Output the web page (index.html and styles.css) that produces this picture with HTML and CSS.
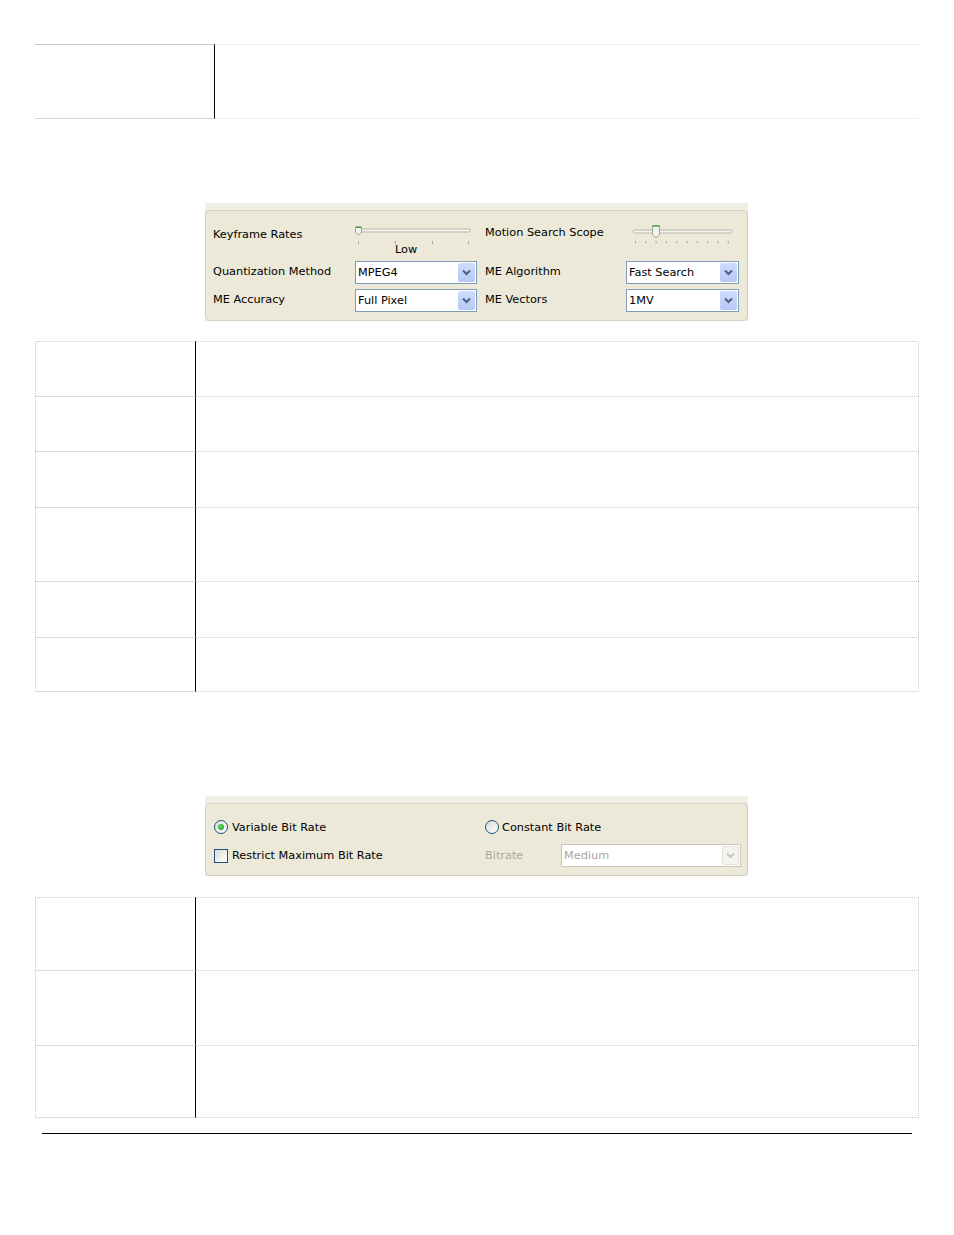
FILE: index.html
```html
<!DOCTYPE html>
<html>
<head>
<meta name="viewport" content="width=device-width, initial-scale=1">
<title>Encoder Settings</title>
<link rel="stylesheet" href="styles.css">
</head>
<body>
<div class="page">

   <!-- Top table -->
   <div class="spec spec-top">
      <div class="spec-row">
         <div class="spec-key"></div>
         <div class="spec-val"></div>
      </div>
   </div>

   <!-- Advanced motion panel -->
   <div class="panel panel-motion">
      <div class="group group-motion">
         <div class="label label-key">Keyframe Rates</div>
         <div class="slider-cell">
            <svg width="122" height="34" viewBox="0 0 122 34" xmlns="http://www.w3.org/2000/svg">
               <rect x="0.5" y="7" width="115" height="3" rx="1.5" fill="#f4f3ee" stroke="#a9a89f" stroke-width="0.8"/>
               <g stroke="#a6a59c" stroke-width="1">
                  <line x1="3.5" y1="19" x2="3.5" y2="22"/>
                  <line x1="40.5" y1="19" x2="40.5" y2="22"/>
                  <line x1="77.5" y1="19" x2="77.5" y2="22"/>
                  <line x1="113.5" y1="19" x2="113.5" y2="22"/>
               </g>
               <polygon points="0.5,5 6.5,5 6.5,10 3.5,13 0.5,10" fill="#f4f4ef" stroke="#86907f" stroke-width="0.8"/>
               <line x1="1" y1="5.3" x2="6" y2="5.3" stroke="#3aa63a" stroke-width="1.4"/>
               <text x="51" y="31" text-anchor="middle" class="slider-text">Low</text>
            </svg>
         </div>
         <div class="label label-motion">Motion Search Scope</div>
         <div class="slider-cell">
            <svg width="113" height="34" viewBox="0 0 113 34" xmlns="http://www.w3.org/2000/svg">
               <rect x="7" y="8" width="99" height="3" rx="1.5" fill="#f4f3ee" stroke="#a9a89f" stroke-width="0.8"/>
               <g id="motionTicks" stroke="#a6a59c" stroke-width="1"></g>
               <polygon points="26.5,3.5 33.5,3.5 33.5,12.5 30,16 26.5,12.5" fill="#f4f4ef" stroke="#86907f" stroke-width="0.8"/>
               <line x1="27" y1="4" x2="33" y2="4" stroke="#3aa63a" stroke-width="1.4"/>
            </svg>
         </div>

         <div class="label label-raised">Quantization Method</div>
         <div class="select">
            <span class="select-value">MPEG4</span>
            <span class="select-arrow"><svg width="17" height="19" viewBox="0 0 17 19"><path d="M5 7.5 L8.5 11 L12 7.5" fill="none" stroke="#4d6185" stroke-width="2"/></svg></span>
         </div>
         <div class="label label-right label-raised">ME Algorithm</div>
         <div class="select">
            <span class="select-value">Fast Search</span>
            <span class="select-arrow"><svg width="17" height="19" viewBox="0 0 17 19"><path d="M5 7.5 L8.5 11 L12 7.5" fill="none" stroke="#4d6185" stroke-width="2"/></svg></span>
         </div>

         <div class="label label-raised">ME Accuracy</div>
         <div class="select">
            <span class="select-value">Full Pixel</span>
            <span class="select-arrow"><svg width="17" height="19" viewBox="0 0 17 19"><path d="M5 7.5 L8.5 11 L12 7.5" fill="none" stroke="#4d6185" stroke-width="2"/></svg></span>
         </div>
         <div class="label label-right label-raised">ME Vectors</div>
         <div class="select">
            <span class="select-value">1MV</span>
            <span class="select-arrow"><svg width="17" height="19" viewBox="0 0 17 19"><path d="M5 7.5 L8.5 11 L12 7.5" fill="none" stroke="#4d6185" stroke-width="2"/></svg></span>
         </div>
      </div>
   </div>

   <!-- Settings table -->
   <div class="spec spec-mid">
      <div class="spec-row row-55"><div class="spec-key"></div><div class="spec-val"></div></div>
      <div class="spec-row row-55"><div class="spec-key"></div><div class="spec-val"></div></div>
      <div class="spec-row row-56"><div class="spec-key"></div><div class="spec-val"></div></div>
      <div class="spec-row row-74"><div class="spec-key"></div><div class="spec-val"></div></div>
      <div class="spec-row row-56"><div class="spec-key"></div><div class="spec-val"></div></div>
      <div class="spec-row row-55"><div class="spec-key"></div><div class="spec-val"></div></div>
   </div>

   <!-- Bit rate panel -->
   <div class="panel panel-rate">
      <div class="group group-rate">
         <label class="option">
            <span class="radio checked"></span>
            <span>Variable Bit Rate</span>
         </label>
         <label class="option option-wide">
            <span class="radio"></span>
            <span>Constant Bit Rate</span>
         </label>

         <label class="option">
            <span class="checkbox"></span>
            <span>Restrict Maximum Bit Rate</span>
         </label>
         <div class="label disabled">Bitrate</div>
         <div class="select select-disabled">
            <span class="select-value">Medium</span>
            <span class="select-arrow"><svg width="17" height="19" viewBox="0 0 17 19"><path d="M5 7.5 L8.5 11 L12 7.5" fill="none" stroke="#c9c7ba" stroke-width="2"/></svg></span>
         </div>
      </div>
   </div>

   <!-- Bit rate table -->
   <div class="spec spec-low">
      <div class="spec-row row-73"><div class="spec-key"></div><div class="spec-val"></div></div>
      <div class="spec-row row-75"><div class="spec-key"></div><div class="spec-val"></div></div>
      <div class="spec-row row-73"><div class="spec-key"></div><div class="spec-val"></div></div>
   </div>

   <div class="footer-rule"></div>
</div>

<script>
// tick marks under the motion search scope slider
const motionTicks = document.getElementById('motionTicks');
for (let i = 0; i < 10; i++) {
   const x = 9.5 + i * 10.3;
   const tick = document.createElementNS('http://www.w3.org/2000/svg', 'line');
   tick.setAttribute('x1', x);
   tick.setAttribute('x2', x);
   tick.setAttribute('y1', 19);
   tick.setAttribute('y2', 21.5);
   motionTicks.appendChild(tick);
}
</script>
</body>
</html>
```

FILE: styles.css
```css
html,
body {
   margin: 0;
   padding: 0;
   background: #fff;
   color: #000;
   font-family: "DejaVu Sans", Verdana, sans-serif;
   font-size: 11.3px;
}

.page {
   padding: 44px 0 60px 35px;
   width: 884px;
}

/* ---------- tables ---------- */

.spec {
   width: 884px;
}

.spec-row {
   display: grid;
   grid-template-columns: 161px 1fr;
   height: 55px;
}

.spec-key,
.spec-val {
   box-sizing: border-box;
}

.spec-key {
   border-top: 1px solid #dcdcdc;
   border-left: 1px dotted #c8c8c8;
   border-right: 1px solid #000;
}

.spec-val {
   border-top: 1px dotted #c8c8c8;
   border-right: 1px dotted #c8c8c8;
}

.spec-row:first-child .spec-key {
   border-top: 1px dotted #c8c8c8;
}

.spec-row:last-child .spec-key {
   border-bottom: 1px solid #dcdcdc;
}

.spec-row:last-child .spec-val {
   border-bottom: 1px dotted #c8c8c8;
}

.row-55 { height: 55px; }
.row-56 { height: 56px; }
.row-73 { height: 73px; }
.row-74 { height: 74px; }
.row-75 { height: 75px; }

.spec-top .spec-row {
   grid-template-columns: 180px 1fr;
   height: 75px;
}

.spec-top .spec-key,
.spec-top .spec-row:first-child .spec-key {
   border-top: 1px solid #c8c8c8;
   border-bottom: 1px solid #d4d4d4;
   border-left: none;
}

.spec-top .spec-val,
.spec-top .spec-row:last-child .spec-val {
   border-top: 1px solid #efefef;
   border-bottom: 1px solid #efefef;
   border-right: none;
}

.spec-mid {
   margin-top: 20px;
}

.spec-low {
   margin-top: 21px;
}

.footer-rule {
   margin: 15px 0 0 7px;
   width: 870px;
   border-top: 1px solid #000;
}

/* ---------- xp style panels ---------- */

.panel {
   box-sizing: border-box;
   margin-left: 170px;
   width: 543px;
   padding-top: 7px;
   background: linear-gradient(#f1efe6 0, #f1efe6 7px, #ece9d8 7px);
}

.panel-motion {
   margin-top: 84px;
   height: 118px;
}

.panel-rate {
   margin-top: 104px;
   height: 80px;
}

.group {
   box-sizing: border-box;
   height: 100%;
   border: 1px solid #d3d0bd;
   border-radius: 5px;
   background: #ece9d8;
   display: grid;
}

.group-motion {
   grid-template-columns: 142px 122px 149px 113px;
   grid-template-rows: 34px 23px 23px;
   row-gap: 5px;
   padding: 11px 8px 8px 7px;
}

.group-rate {
   grid-template-columns: 271px 76px 180px;
   grid-template-rows: 20px 23px;
   row-gap: 7px;
   padding: 13px 6px 8px 8px;
}

.label {
   display: flex;
   align-items: center;
   white-space: nowrap;
}

.label-right {
   padding-left: 8px;
}

.label-raised {
   padding-bottom: 3px;
}

.label-key {
   align-self: start;
   padding-top: 6px;
}

.label-motion {
   align-self: start;
   padding-top: 4px;
   padding-left: 8px;
}

.slider-cell svg {
   display: block;
}

.slider-text {
   font-family: "DejaVu Sans", Verdana, sans-serif;
   font-size: 11.3px;
   fill: #000;
}

.disabled {
   color: #aca899;
}

/* ---------- combo boxes ---------- */

.select {
   box-sizing: border-box;
   display: flex;
   align-items: center;
   height: 23px;
   padding: 1px;
   border: 1px solid #7f9db9;
   background: #fff;
}

.select-value {
   flex: 1;
   padding-left: 1px;
   white-space: nowrap;
}

.select-arrow {
   width: 17px;
   height: 19px;
   border-radius: 2px;
   background: linear-gradient(#cfdcfb, #b6c8f5);
}

.select-arrow svg {
   display: block;
}

.select-disabled {
   border-color: #c9c7ba;
   color: #aca899;
}

.select-disabled .select-arrow {
   background: #f4f3ee;
   box-shadow: inset 0 0 0 1px #e6e4da;
}

/* ---------- radios and checkboxes ---------- */

.option {
   display: flex;
   align-items: center;
   gap: 4px;
   white-space: nowrap;
}

.option-wide {
   grid-column: span 2;
   gap: 3px;
}

.radio {
   position: relative;
   box-sizing: border-box;
   width: 14px;
   height: 14px;
   border: 1px solid #1c5180;
   border-radius: 50%;
   background: linear-gradient(135deg, #dcdcd6, #fff);
}

.radio.checked::after {
   content: "";
   position: absolute;
   left: 3px;
   top: 3px;
   width: 6px;
   height: 6px;
   border-radius: 50%;
   background: radial-gradient(circle at 40% 40%, #5fd25f, #1a9e1a);
}

.checkbox {
   box-sizing: border-box;
   width: 14px;
   height: 14px;
   border: 1px solid #1c5180;
   background: linear-gradient(135deg, #dcdcd6, #fff);
}
```
